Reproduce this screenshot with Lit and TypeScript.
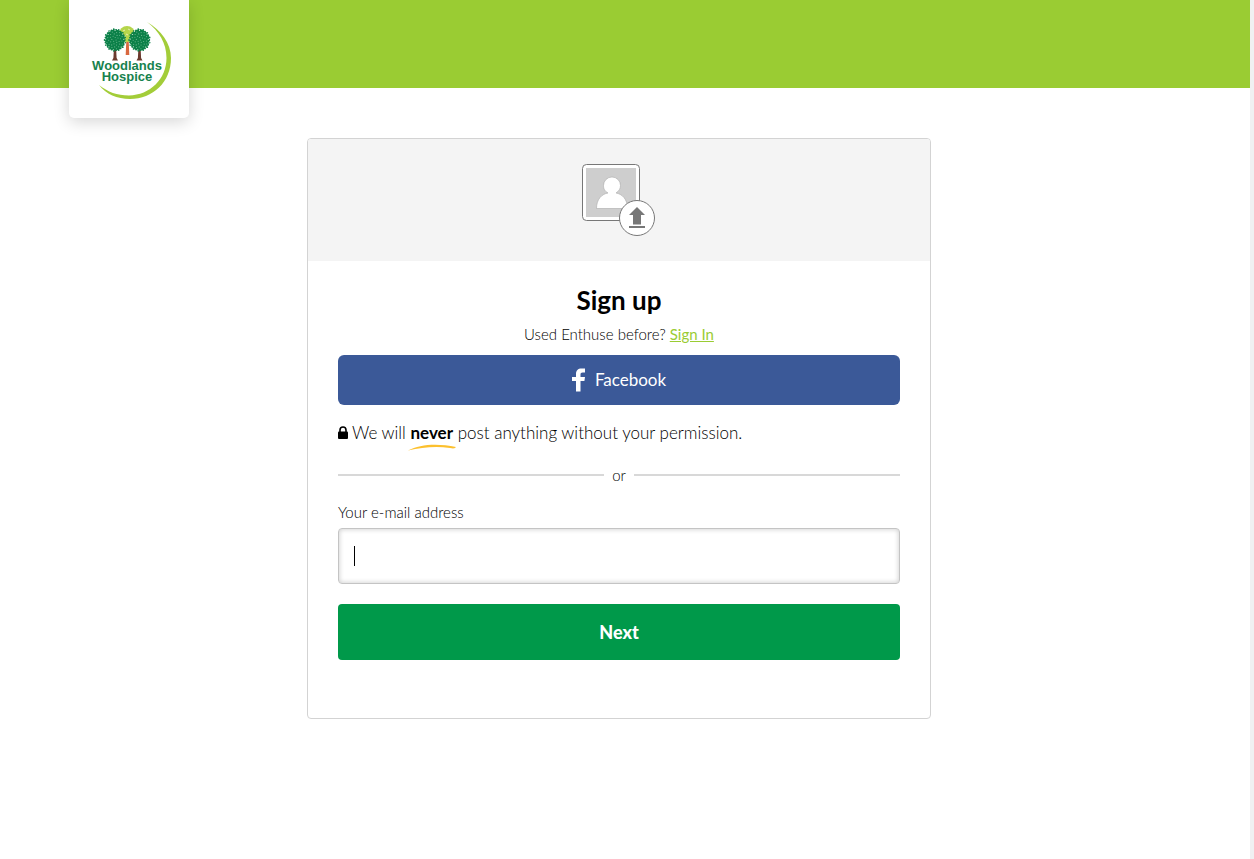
import { LitElement, html, css, svg } from "lit";
import { customElement } from "lit/decorators.js";

const foliage = (cx: number, cy: number) => {
  const dots = [];
  for (let i = 0; i < 26; i++) {
    const a = (i / 26) * Math.PI * 2;
    const r = i % 2 ? 10.4 : 9.8;
    dots.push(svg`<circle cx=${cx + r * Math.cos(a)} cy=${cy + r * 1.04 * Math.sin(a)} r="0.9" fill="#0b8048" />`);
  }
  for (let i = 0; i < 44; i++) {
    const r = 10 * Math.sqrt((i + 0.5) / 44);
    const a = i * 2.4;
    dots.push(
      svg`<circle cx=${cx + r * Math.cos(a)} cy=${cy + r * 1.04 * Math.sin(a)} r="0.55" fill=${i > 32 ? "#e6f5ec" : "#6bb890"} />`
    );
  }
  return dots;
};

@customElement("site-logo")
export class SiteLogo extends LitElement {
  static styles = css`
    :host,
    .logo {
      display: block;
    }
    .name {
      font-family: "Liberation Sans", Arial, sans-serif;
      font-size: 13px;
      font-weight: 700;
      fill: #17824e;
      text-anchor: middle;
    }
  `;
  render() {
    return html`<svg class="logo" width="120" height="118" viewBox="0 0 120 118" role="img" aria-label="Woodlands Hospice">
      <path d="M78 22C92 30 102 43 102 58C102 82 84 99 61 99C48 99 37 94 30 85C39 92 48 95.500 60 95.500C81 95 97.500 79 97.500 58C97.500 43 90 31 78 22Z" fill="#a3cd39" />
      <path d="M57.500 36h2l.8 19h-3.600z" fill="#d9683f" />
      <ellipse cx="58" cy="34" rx="8" ry="8" fill="#b5d54a" />
      <path d="M54 31l2-1M59 29l2 1M57 34l2 1M61 35l1-1M55 37l2-1" stroke="#e3efb0" />
      <path d="M45 46h2l.6 12 1.400 2.500h-6l1.400-2.500zM69.500 46h2l.6 12 1.400 2.500h-6l1.400-2.500z" fill="#6b3a2e" />
      <ellipse cx="46" cy="40" rx="10" ry="10.500" fill="#0b8048" />
      <ellipse cx="70.500" cy="40" rx="10" ry="10.500" fill="#0b8048" />
      ${foliage(46, 40)} ${foliage(70.5, 40)}
      <text class="name"><tspan x="58" y="70">Woodlands</tspan><tspan x="58" y="81">Hospice</tspan></text>
    </svg>`;
  }
}

@customElement("app-root")
export class AppRoot extends LitElement {
  static styles = css`
    :host {
      display: block;
      min-height: 100vh;
      box-sizing: border-box;
      border-right: 4px solid #f0f0f2;
      background: #fff;
      color: #000;
      font-family: Lato, "Open Sans", sans-serif;
      font-size: 15px;
      font-weight: 300;
      line-height: 20px;
    }
    .header {
      height: 88px;
      padding-left: 69px;
      background: #9acc33;
    }
    .brand {
      display: block;
      width: 120px;
      border-radius: 0 0 5px 5px;
      background: #fff;
      box-shadow: 0 4px 16px rgba(0, 0, 0, 0.16);
      position: relative;
    }
    .main {
      padding: 50px 12px 40px 0;
    }
    .card {
      box-sizing: border-box;
      max-width: 624px;
      margin: 0 auto;
      border: 1px solid #d3d3d3;
      border-radius: 4px;
      overflow: hidden;
    }
    .banner {
      display: flex;
      justify-content: center;
      padding: 24px 0;
      background: #f4f4f4;
    }
    .avatar {
      padding: 0;
      border: 0;
      background: none;
      height: 74px;
    }
    .avatar svg {
      display: block;
    }
    .body {
      display: flex;
      flex-direction: column;
      padding: 23px 30px 58px;
    }
    .title {
      margin: 0;
      color: #000;
      font-size: 26px;
      line-height: 32px;
      font-weight: 700;
      text-align: center;
    }
    .switch {
      margin: 8px 0 11px;
      text-align: center;
    }
    .signin {
      color: #9acc33;
      font-weight: 400;
    }
    .facebook {
      display: flex;
      align-items: center;
      justify-content: center;
      gap: 10px;
      height: 50px;
      border: 0;
      border-radius: 6px;
      background: #3b5998;
      color: #fff;
      font: 400 17px/20px Lato, "Open Sans", sans-serif;
    }
    .promise {
      display: flex;
      align-items: center;
      gap: 4px;
      margin: 16px 0 0;
      font-size: 17px;
      line-height: 24px;
    }
    .never {
      position: relative;
      color: #000;
      font-weight: 700;
    }
    .swoosh {
      position: absolute;
      left: -2px;
      top: 22px;
    }
    .divider {
      display: flex;
      align-items: center;
      gap: 8px;
      margin: 20px 0 17px;
    }
    .rule {
      flex: 1;
      height: 2px;
      background: #d8d8d8;
    }
    .field {
      position: relative;
      margin: 6px 0 20px;
    }
    .input {
      display: block;
      box-sizing: border-box;
      width: 100%;
      height: 56px;
      padding: 0 15px;
      border: 1px solid #c4c4c4;
      border-radius: 4px;
      outline: none;
      box-shadow: inset 0 0 4px 1px rgba(0, 0, 0, 0.16);
      background: #fff;
      color: #000;
      caret-color: transparent;
      font: 400 17px/20px Lato, "Open Sans", sans-serif;
    }
    .caret {
      position: absolute;
      left: 16px;
      top: 18px;
      width: 1px;
      height: 20px;
      background: #000;
    }
    .next {
      height: 56px;
      border: 0;
      border-radius: 4px;
      background: #00994a;
      color: #fff;
      font: 900 18px/24px Lato, "Open Sans", sans-serif;
    }
  `;

  render() {
    return html`
      <header class="header"><div class="brand"><site-logo></site-logo></div></header>
      <main class="main">
        <section class="card">
          <div class="banner">
            <button class="avatar" type="button" aria-label="Upload a photo">
              <svg width="74" height="74" viewBox="0 0 74 74">
                <rect x="0.500" y="1.500" width="57" height="56" rx="4" fill="#fff" stroke="#777" />
                <rect x="4" y="5" width="50" height="49" fill="#cecece" />
                <path d="M14.500 45.500C14.500 36 20 31 26 30C22.500 28 21.500 25.500 21.500 22.500a8.500 8.500 0 0 1 17 0C38.500 25.500 37 28 34 30C40 31 45.500 36 45.500 45.500Z" fill="#fff" stroke="#aaa" stroke-width="0.600" />
                <circle cx="55" cy="55" r="17.500" fill="#fff" stroke="#777" />
                <path d="M55 44l8 8h-4v9.500h-8V52h-4zM47 63h16v2H47z" fill="#777" />
              </svg>
            </button>
          </div>
          <form class="body" @submit=${(e: Event) => e.preventDefault()}>
            <h1 class="title">Sign up</h1>
            <p class="switch">Used Enthuse before? <a class="signin" href="#">Sign In</a></p>
            <button class="facebook" type="button">
              <svg width="13" height="24" viewBox="0 0 13 24" aria-hidden="true">
                <path d="M4 23.500V13H0V9h4V6C4 2.500 6 .5 9.500.5H13v4h-2.300C9 4.500 8.500 5.200 8.500 6.500V9H13l-.6 4H8.500v10.500z" fill="#fff" />
              </svg>
              Facebook
            </button>
            <p class="promise">
              <svg width="10" height="14" viewBox="0 0 10 14" aria-hidden="true">
                <path d="M2 6V4a3 3 0 0 1 6 0v2" fill="none" stroke="#000" stroke-width="1.600" />
                <rect y="5.500" width="10" height="7.500" rx="1" fill="#000" />
              </svg>
              <span>We will <strong class="never">never<svg class="swoosh" width="48" height="8" viewBox="0 0 48 8" aria-hidden="true"><path d="M0 6.500C12 0 30-1 48 3C46 5 45 4.500 42 4C27 2 14 3.500 0 6.500Z" fill="#fcc02e" /></svg></strong> post anything without your permission.</span>
            </p>
            <div class="divider"><span class="rule"></span><span>or</span><span class="rule"></span></div>
            <label for="email">Your e-mail address</label>
            <div class="field">
              <input class="input" id="email" type="email" />
              <span class="caret"></span>
            </div>
            <button class="next" type="submit">Next</button>
          </form>
        </section>
      </main>
    `;
  }
}
